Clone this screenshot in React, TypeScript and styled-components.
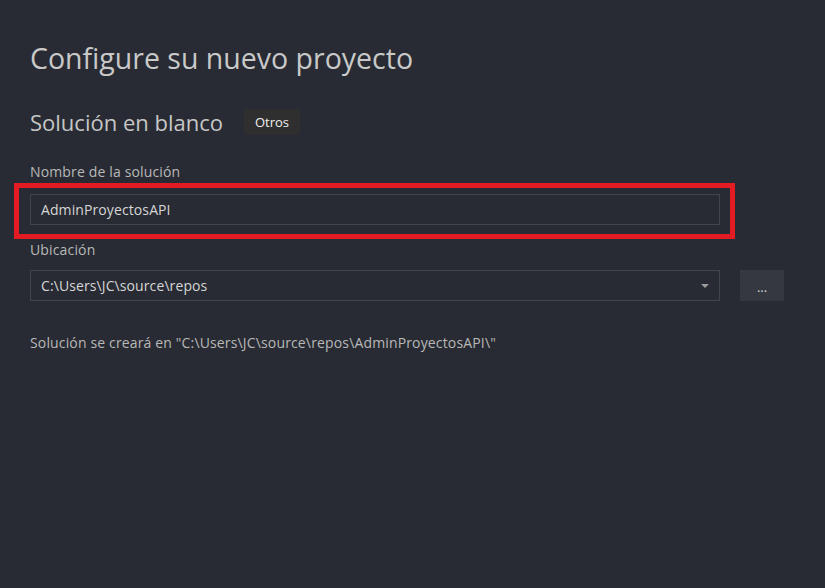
import React from "react";
import styled, { createGlobalStyle } from "styled-components";

const Global = createGlobalStyle`
  html, body { margin: 0; padding: 0; background: #282b33; }
  body { font-family: "Open Sans", "Noto Sans", sans-serif; }
`;

const Page = styled.div`
  width: 825px;
  height: 588px;
  box-sizing: border-box;
  background: #282b33;
  padding: 38px 41px 0 30px;
  display: flex;
  flex-direction: column;
  color: #c8c8c8;
`;

const Title = styled.h1`
  margin: 0;
  font-weight: 400;
  font-size: 28.5px;
  line-height: 40px;
  color: #c9c9c9;
`;

const SubRow = styled.div`
  display: flex;
  align-items: center;
  gap: 21px;
  margin-top: 29px;
`;

const SubTitle = styled.h2`
  margin: 0;
  font-weight: 400;
  font-size: 22px;
  line-height: 30px;
  color: #c6c6c6;
`;

const Badge = styled.span`
  display: inline-flex;
  align-items: center;
  height: 26px;
  padding: 0 11px;
  border-radius: 4px;
  background: #302f2f;
  color: #f0f0f0;
  font-size: 13px;
`;

const Label = styled.div<{ $top: number }>`
  margin-top: ${(p) => p.$top}px;
  font-size: 14px;
  line-height: 20px;
  letter-spacing: 0.15px;
  color: #b8b8b8;
`;

const FieldRow = styled.div<{ $top: number }>`
  display: flex;
  align-items: center;
  gap: 20px;
  margin-top: ${(p) => p.$top}px;
`;

const FieldWrap = styled.div`
  position: relative;
  width: 690px;
`;

const Input = styled.div`
  box-sizing: border-box;
  width: 690px;
  height: 31px;
  border: 1px solid #40444c;
  background: #282b33;
  display: flex;
  align-items: center;
  padding: 0 10px;
  font-size: 14px;
  letter-spacing: 0.1px;
  color: #d6d6d6;
  justify-content: space-between;
`;

const Highlight = styled.div`
  position: absolute;
  left: -16px;
  top: -11px;
  right: -15px;
  bottom: -14px;
  border: 5px solid #e21c22;
  pointer-events: none;
`;

const Arrow = styled.span`
  width: 0;
  height: 0;
  border-left: 4px solid transparent;
  border-right: 4px solid transparent;
  border-top: 4px solid #9c9c9c;
  margin-right: 0px;
`;

const BrowseButton = styled.div`
  width: 44px;
  height: 31px;
  background: #353841;
  color: #d6d6d6;
  display: flex;
  align-items: center;
  justify-content: center;
  font-size: 13px;
  line-height: 1;
  padding-top: 4px;
  box-sizing: border-box;
`;

const Note = styled.div`
  margin-top: 32px;
  font-size: 14px;
  line-height: 20px;
  letter-spacing: 0.15px;
  color: #b8b8b8;
`;

export default function App() {
  return (
    <>
      <Global />
      <Page>
        <Title>Configure su nuevo proyecto</Title>
        <SubRow>
          <SubTitle>Solución en blanco</SubTitle>
          <Badge>Otros</Badge>
        </SubRow>
        <Label $top={25}>Nombre de la solución</Label>
        <FieldRow $top={12}>
          <FieldWrap>
            <Input>AdminProyectosAPI</Input>
            <Highlight />
          </FieldWrap>
        </FieldRow>
        <Label $top={15}>Ubicación</Label>
        <FieldRow $top={10}>
          <Input>
            <span>C:\Users\JC\source\repos</span>
            <Arrow />
          </Input>
          <BrowseButton>...</BrowseButton>
        </FieldRow>
        <Note>Solución se creará en "C:\Users\JC\source\repos\AdminProyectosAPI\"</Note>
      </Page>
    </>
  );
}
